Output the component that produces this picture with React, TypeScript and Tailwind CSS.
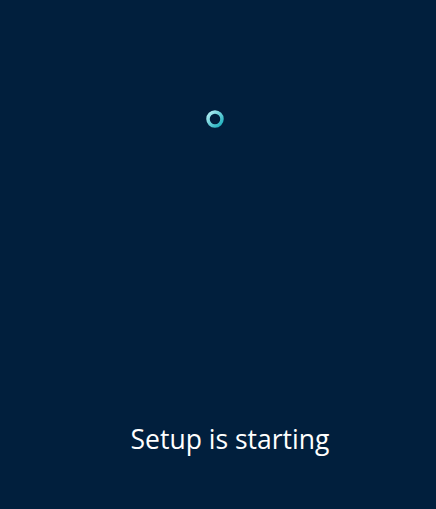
export default function App() {
  return (
    <div className="flex h-[509px] w-[436px] flex-col items-center bg-[#011f3d]">
      <div className="mt-[109px] ml-[-6px] h-[20px] w-[20px]">
        <svg width="20" height="20" viewBox="0 0 20 20">
          <defs>
            <linearGradient id="g" x1="0" y1="0" x2="1" y2="1">
              <stop offset="0" stopColor="#b5eef5" />
              <stop offset="1" stopColor="#18aebb" />
            </linearGradient>
          </defs>
          <circle cx="10" cy="10" r="7" fill="none" stroke="url(#g)" strokeWidth="3.5" />
        </svg>
      </div>
      <div className="flex-1" />
      <p className="mb-[52px] ml-[24px] font-['Open_Sans',sans-serif] text-[26.5px] leading-[36px] text-white">
        Setup is starting
      </p>
    </div>
  )
}
